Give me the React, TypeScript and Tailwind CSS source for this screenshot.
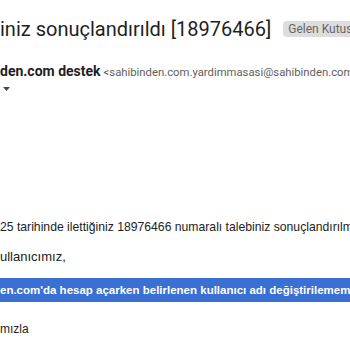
export default function App() {
  return (
    <div className="w-[350px] h-[350px] overflow-hidden bg-white">
      <div className="flex flex-col pt-[13px]">
        <div className="flex items-center gap-[12px] whitespace-nowrap h-[32px]">
          <span className="font-['Roboto',sans-serif] text-[20px] leading-[28px] text-[#1f1f1f]">
            iniz sonuçlandırıldı [18976466]
          </span>
          <span className="rounded-[4px] bg-[#dddddd] px-[5px] h-[16px] leading-[16px] text-[12px] text-[#666666] font-['Roboto',sans-serif]">
            Gelen Kutusu
          </span>
        </div>
        <div className="mt-[16px] flex items-baseline gap-[3px] whitespace-nowrap h-[20px]">
          <span className="font-['Roboto',sans-serif] font-bold text-[14px] text-[#1f1f1f]">den.com destek</span>
          <span className="font-['Roboto',sans-serif] text-[11.3px] text-[#5e5e5e]">
            &lt;sahibinden.com.yardimmasasi@sahibinden.com&gt;
          </span>
        </div>
        <div className="mt-[2px] h-[12px] flex items-center pl-[3px]">
          <svg width="7" height="4" viewBox="0 0 7 4">
            <path d="M0 0h7L3.5 4z" fill="#444746" />
          </svg>
        </div>
        <div className="mt-[122px] flex flex-col font-['Liberation_Sans',Arial,sans-serif] text-[#222222] whitespace-nowrap">
          <div className="h-[20px] leading-[20px] text-[12.2px]">25 tarihinde ilettiğiniz 18976466 numaralı talebiniz sonuçlandırılmıştır.</div>
          <div className="mt-[10px] h-[20px] leading-[20px] text-[13px]">ullanıcımız,</div>
          <div className="mt-[11px] h-[24px] leading-[24px] bg-[#3a70d4] text-white text-[11.5px] font-bold">
            en.com'da hesap açarken belirlenen kullanıcı adı değiştirilememektedir.
          </div>
          <div className="mt-[17px] h-[20px] leading-[20px] text-[12px]">mızla</div>
        </div>
      </div>
    </div>
  )
}
